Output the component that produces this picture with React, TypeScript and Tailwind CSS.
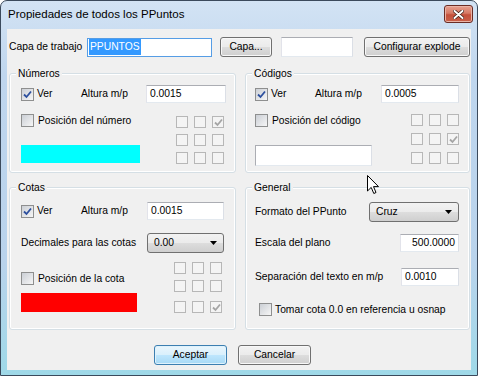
import React from 'react';

const btnBg = 'bg-[linear-gradient(#f2f2f2_0%,#ebebeb_50%,#dddddd_51%,#cfcfcf_100%)]';

const Tick = ({ color }: { color: string }) => (
    <svg width="9" height="9" viewBox="0 0 9 9">
        <path d="M1 4.5 L3.5 7 L8 1.5" fill="none" stroke={color} strokeWidth="1.8" />
    </svg>
);

const CheckBox = ({ checked }: { checked?: boolean }) => (
    <span className="flex h-[13px] w-[13px] shrink-0 items-center justify-center border border-[#8e8f8f] bg-white">
        <span className="flex h-[11px] w-[11px] items-center justify-center bg-[linear-gradient(135deg,#cbcfd5,#f6f6f6)]">
            {checked && <Tick color="#2c4f9e" />}
        </span>
    </span>
);

// disabled little boxes of the position grid
const GridBox = ({ checked }: { checked?: boolean }) => (
    <span className="flex h-[12px] w-[12px] items-center justify-center border border-[#b7b7b7] bg-[#f4f4f4]">
        {checked && <Tick color="#a5a5a5" />}
    </span>
);

const PosGrid = ({ on, gaps }: { on: number; gaps: [string, string] }) => (
    <div className="flex flex-col">
        {[0, 1, 2].map((r) => (
            <div key={r} className={`flex gap-[6px] ${r === 1 ? gaps[0] : r === 2 ? gaps[1] : ''}`}>
                {[0, 1, 2].map((c) => (
                    <GridBox key={c} checked={r * 3 + c === on} />
                ))}
            </div>
        ))}
    </div>
);

const TextBox = ({ value, className = '', right }: { value: string; className?: string; right?: boolean }) => (
    <div
        className={`flex h-[18px] items-center border border-[#abadb3] border-r-[#dbdfe6] border-b-[#e3e9ef] border-l-[#e2e3ea] bg-white px-[3px] ${right ? 'justify-end' : ''} ${className}`}
    >
        {value}
    </div>
);

const Select = ({ value, className = '' }: { value: string; className?: string }) => (
    <div className={`flex h-[20px] items-center rounded-[3px] border border-[#707070] pl-[6px] pr-[6px] ${btnBg} ${className}`}>
        <span className="flex-1">{value}</span>
        <svg width="7" height="4" viewBox="0 0 7 4">
            <path d="M0 0 H7 L3.5 4 Z" fill="#000" />
        </svg>
    </div>
);

const Button = ({ label, className = '', primary }: { label: string; className?: string; primary?: boolean }) => (
    <div
        className={`flex h-[20px] items-center justify-center rounded-[3px] border ${
            primary
                ? 'border-[#3c7fb1] bg-[linear-gradient(#eaf6fd_0%,#d9f0fc_50%,#bee6fd_51%,#a7d9f5_100%)] shadow-[inset_0_0_0_1px_#dff2fc]'
                : `border-[#707070] ${btnBg} shadow-[inset_0_0_0_1px_#f8f8f8]`
        } ${className}`}
    >
        {label}
    </div>
);

const Group = ({ title, className = '', children }: { title: string; className?: string; children: React.ReactNode }) => (
    <div className={`relative rounded-[3px] border border-[#d5dfe5] shadow-[inset_0_0_0_1px_#ffffff] ${className}`}>
        <span className="absolute -top-[7px] left-[6px] bg-[#f0f0f0] px-[2px] leading-[13px]">{title}</span>
        {children}
    </div>
);

const Cursor = () => (
    <svg className="absolute left-[367px] top-[175px]" width="13" height="20" viewBox="0 0 13 20">
        <path d="M0.5 0.5 V16 L4.2 12.4 L6.8 18.5 L9 17.5 L6.5 11.6 H11.5 Z" fill="#fff" stroke="#000" strokeWidth="1" />
    </svg>
);

const App = () => {
    return (
        <div className="relative h-[376px] w-[478px] overflow-hidden whitespace-nowrap bg-white font-['Liberation_Sans',Arial,sans-serif] text-[10.3px] text-black">
            <div className="flex h-full w-full flex-col rounded-t-[7px] border border-[#3b4a5c] bg-[linear-gradient(#d3e3f4_0%,#bfd6ee_20%,#b9d3ec_70%,#9fd9e8_100%)]">
                {/* Title bar */}
                <div className="flex h-[28px] shrink-0 items-start">
                    <span className="ml-[7px] mt-[5px] text-[11.5px] leading-[16px]">Propiedades de todos los PPuntos</span>
                    <div className="ml-auto mr-[4px] mt-[4px] flex h-[18px] w-[29px] items-center justify-center rounded-[3px] border border-[#6a2c25] bg-[linear-gradient(#e6a090_0%,#d67a66_45%,#c4503b_55%,#c9604a_100%)] shadow-[inset_0_0_0_1px_#eab3a6]">
                        <svg width="11" height="9" viewBox="0 0 11 9">
                            <path d="M1.5 1 L9.5 8 M9.5 1 L1.5 8" stroke="#3a1a14" strokeWidth="3.4" strokeLinecap="round" />
                            <path d="M1.5 1 L9.5 8 M9.5 1 L1.5 8" stroke="#fff" strokeWidth="2" strokeLinecap="round" />
                        </svg>
                    </div>
                </div>

                {/* Dialog body */}
                <div className="ml-[6px] flex h-[341px] w-[464px] flex-col bg-[#f0f0f0] pl-[2px] pt-[8px]">
                    {/* Capa de trabajo */}
                    <div className="flex h-[20px] items-center">
                        <span className="w-[78px]">Capa de trabajo</span>
                        <div className="flex h-[19px] w-[125px] items-center border border-[#569de5] bg-white px-[1px]">
                            <span className="bg-[#3399ff] px-[1px] text-white">PPUNTOS</span>
                        </div>
                        <Button label="Capa..." className="ml-[8px] w-[52px]" />
                        <TextBox value="" className="ml-[9px] h-[20px] w-[72px]" />
                        <Button label="Configurar explode" className="ml-[11px] w-[106px]" />
                    </div>

                    {/* Números / Códigos */}
                    <div className="mt-[16px] flex gap-[9px]">
                        <Group title="Números" className="h-[100px] w-[227px]">
                            <div className="pl-[11px] pt-[11px]">
                                <div className="flex h-[18px] items-center">
                                    <div className="flex w-[60px] items-center">
                                        <CheckBox checked />
                                        <span className="ml-[3px]">Ver</span>
                                    </div>
                                    <span className="w-[65px]">Altura m/p</span>
                                    <TextBox value="0.0015" className="w-[80px]" />
                                </div>
                                <div className="mt-[11px] flex">
                                    <div className="flex w-[155px] flex-col">
                                        <div className="flex h-[13px] items-center">
                                            <CheckBox />
                                            <span className="ml-[4px]">Posición del número</span>
                                        </div>
                                        <div className="mt-[18px] h-[18px] w-[119px] bg-[#00ffff]" />
                                    </div>
                                    <div className="mt-[2px]">
                                        <PosGrid on={2} gaps={['mt-[6px]', 'mt-[6px]']} />
                                    </div>
                                </div>
                            </div>
                        </Group>

                        <Group title="Códigos" className="h-[100px] w-[225px]">
                            <div className="pl-[9px] pt-[11px]">
                                <div className="flex h-[18px] items-center">
                                    <div className="flex w-[60px] items-center">
                                        <CheckBox checked />
                                        <span className="ml-[3px]">Ver</span>
                                    </div>
                                    <span className="w-[66px]">Altura m/p</span>
                                    <TextBox value="0.0005" className="w-[78px]" />
                                </div>
                                <div className="mt-[11px] flex">
                                    <div className="flex w-[156px] flex-col">
                                        <div className="flex h-[13px] items-center">
                                            <CheckBox />
                                            <span className="ml-[4px]">Posición del código</span>
                                        </div>
                                        <div className="mt-[18px] h-[21px] w-[117px] border border-[#abadb3] border-b-[#e3e9ef] border-r-[#dbdfe6] bg-white" />
                                    </div>
                                    <PosGrid on={5} gaps={['mt-[7px]', 'mt-[7px]']} />
                                </div>
                            </div>
                        </Group>
                    </div>

                    {/* Cotas / General */}
                    <div className="mt-[14px] flex gap-[9px]">
                        <Group title="Cotas" className="h-[143px] w-[227px]">
                            <div className="pl-[11px] pt-[14px]">
                                <div className="flex h-[18px] items-center">
                                    <div className="flex w-[60px] items-center">
                                        <CheckBox checked />
                                        <span className="ml-[3px]">Ver</span>
                                    </div>
                                    <span className="w-[66px]">Altura m/p</span>
                                    <TextBox value="0.0015" className="w-[77px]" />
                                </div>
                                <div className="mt-[13px] flex h-[20px] items-center">
                                    <span className="w-[126px]">Decimales para las cotas</span>
                                    <Select value="0.00" className="w-[77px]" />
                                </div>
                                <div className="mt-[9px] flex">
                                    <div className="flex w-[153px] flex-col">
                                        <div className="mt-[10px] flex h-[13px] items-center">
                                            <CheckBox />
                                            <span className="ml-[4px]">Posición de la cota</span>
                                        </div>
                                        <div className="mt-[8px] h-[19px] w-[116px] bg-[#ff0000]" />
                                    </div>
                                    <PosGrid on={8} gaps={['mt-[6px]', 'mt-[9px]']} />
                                </div>
                            </div>
                        </Group>

                        <Group title="General" className="h-[143px] w-[225px]">
                            <div className="pl-[9px] pt-[14px]">
                                <div className="flex h-[20px] items-center">
                                    <span className="w-[114px]">Formato del PPunto</span>
                                    <Select value="Cruz" className="w-[90px]" />
                                </div>
                                <div className="mt-[12px] flex h-[18px] items-center">
                                    <span className="w-[145px]">Escala del plano</span>
                                    <TextBox value="500.0000" right className="w-[59px]" />
                                </div>
                                <div className="mt-[16px] flex h-[18px] items-center">
                                    <span className="w-[146px]">Separación del texto en m/p</span>
                                    <TextBox value="0.0010" className="w-[58px]" />
                                </div>
                                <div className="ml-[4px] mt-[17px] flex h-[13px] items-center">
                                    <CheckBox />
                                    <span className="ml-[3px]">Tomar cota 0.0 en referencia u osnap</span>
                                </div>
                            </div>
                        </Group>
                    </div>

                    {/* Buttons */}
                    <div className="mt-[15px] flex gap-[11px] pl-[145px]">
                        <Button label="Aceptar" primary className="w-[73px]" />
                        <Button label="Cancelar" className="w-[73px]" />
                    </div>
                </div>
            </div>
            <Cursor />
        </div>
    );
};

export default App;
